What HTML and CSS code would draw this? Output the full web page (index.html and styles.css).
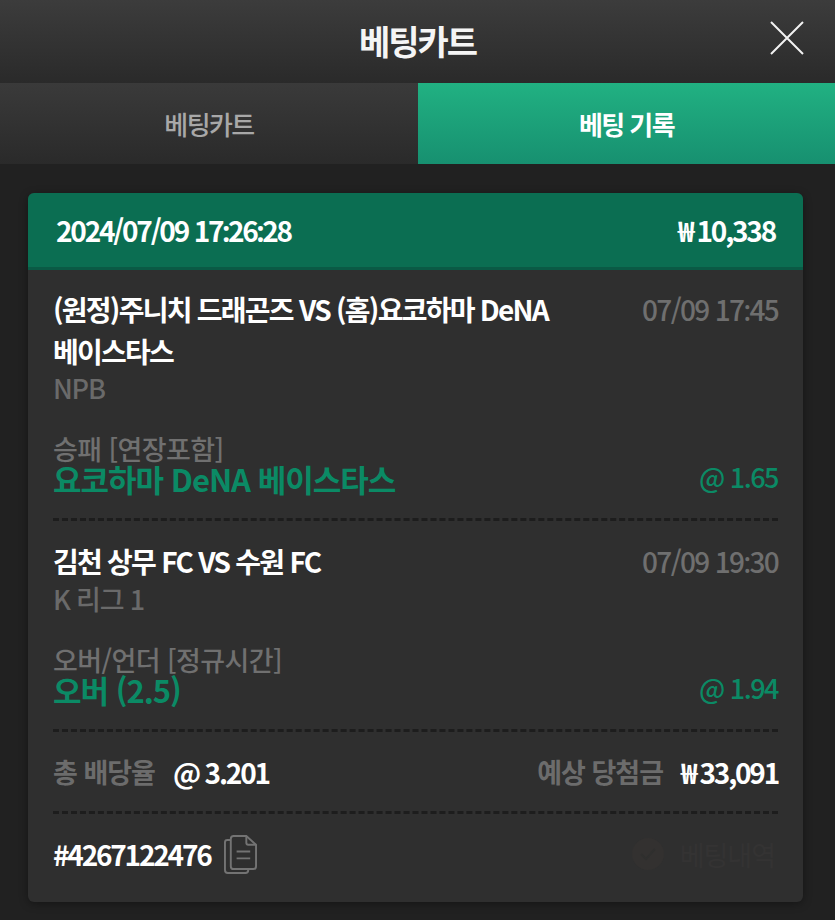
FILE: index.html
```html
<!DOCTYPE html>
<html lang="ko">
  <head>
    <meta charset="utf-8">
    <title>베팅카트</title>
    <link rel="stylesheet" href="styles.css">
  </head>
  <body>
    <header class="top-bar">
      <h1 class="top-title">베팅카트</h1>
      <button class="close-btn" aria-label="닫기">
        <svg width="34" height="34" viewBox="0 0 34 34">
          <path d="M1 1 L33 33 M33 1 L1 33" stroke="#f2f2f2" stroke-width="2" fill="none" />
        </svg>
      </button>
    </header>
    <nav class="tabs">
      <div class="tab">베팅카트</div>
      <div class="tab tab-active">베팅 기록</div>
    </nav>
    <main class="content">
      <section class="card">
        <div class="card-head">
          <span>2024/07/09 17<span class="colon">:</span>26<span class="colon">:</span>28</span>
          <span>₩ 10,338</span>
        </div>
        <div class="card-body">
          <div class="bet bet-first">
            <div class="bet-top">
              <div class="match">(원정)주니치 드래곤즈 VS (홈)요코하마 DeNA 베이스타스</div>
              <div class="time">07/09 17<span class="colon">:</span>45</div>
            </div>
            <div class="league">NPB</div>
            <div class="market">승패 [연장포함]</div>
            <div class="pick-row">
              <span class="pick">요코하마 DeNA 베이스타스</span>
              <span class="odds">@ 1.65</span>
            </div>
          </div>
          <div class="bet">
            <div class="bet-top">
              <div class="match">김천 상무 FC VS 수원 FC</div>
              <div class="time">07/09 19<span class="colon">:</span>30</div>
            </div>
            <div class="league">K 리그 1</div>
            <div class="market">오버/언더 [정규시간]</div>
            <div class="pick-row">
              <span class="pick">오버 (2.5)</span>
              <span class="odds">@ 1.94</span>
            </div>
          </div>
          <div class="summary">
            <div class="summary-item">
              <span class="summary-label">총 배당율</span>
              <span class="summary-value">@ 3.201</span>
            </div>
            <div class="summary-item">
              <span class="summary-label">예상 당첨금</span>
              <span class="summary-value">₩ 33,091</span>
            </div>
          </div>
          <div class="card-foot">
            <div class="ref">
              <span class="ref-no">#4267122476</span>
              <svg class="copy-icon" width="33" height="39" viewBox="0 0 34 40" fill="none" stroke="#737373" stroke-width="2">
                <path d="M7 5 H3.5 Q1 5 1 7.5 V36 Q1 39 4 39 H22 Q25 39 25 36 V35" />
                <path d="M10 1 H23 L33 10 V32 Q33 35 30 35 H10 Q7 35 7 32 V4 Q7 1 10 1 Z" />
                <path d="M23 1 V8 Q23 10 25 10 H33" />
                <path d="M13 17 H27 M13 24 H27" />
              </svg>
            </div>
            <div class="stamp">
              <svg width="32" height="32" viewBox="0 0 32 32">
                <circle cx="16" cy="16" r="16" fill="#333130" />
                <path d="M9 16 L14 21 L23 11" stroke="#2f2f2e" stroke-width="2" fill="none" />
              </svg>
              <span>베팅내역</span>
            </div>
          </div>
        </div>
      </section>
    </main>
  </body>
</html>
```

FILE: styles.css
```css
* {
  box-sizing: border-box;
}
html,
body {
  height: 100%;
}
body {
  margin: 0;
  background: #212121;
  color: #fff;
  font-family: "Noto Sans CJK KR", "Noto Sans", sans-serif;
  overflow: hidden;
}
.colon {
  font-family: "Noto Sans", sans-serif;
}
.top-bar {
  height: 83px;
  display: flex;
  align-items: center;
  justify-content: center;
  position: relative;
  background: linear-gradient(#3c3c3c, #2a2a2a);
}
.top-title {
  margin: -3px 0 0;
  font-size: 34px;
  font-weight: 700;
  letter-spacing: -2px;
  color: #f5f5f5;
}
.close-btn {
  position: absolute;
  top: 21px;
  right: 31px;
  padding: 0;
  height: 34px;
  background: none;
  border: none;
}
.tabs {
  height: 81px;
  display: flex;
}
.tab {
  width: 418px;
  display: flex;
  align-items: center;
  justify-content: center;
  background: linear-gradient(#3a3a3a, #2a2a2a);
  color: #a8a8a8;
  font-size: 26px;
  font-weight: 500;
  letter-spacing: -1.6px;
}
.tab-active {
  flex: 1;
  background: linear-gradient(#21b182, #179070);
  color: #fff;
  font-weight: 700;
}
.content {
  padding: 29px 32px 0 28px;
}
.card {
  height: 709px;
  border-radius: 6px;
  background: #2f2f2f;
  box-shadow: 0 2px 8px rgba(0, 0, 0, 0.35);
  overflow: hidden;
}
.card-head {
  height: 77px;
  padding: 0 28px;
  display: flex;
  align-items: center;
  justify-content: space-between;
  background: #0b6e52;
  border-bottom: 3px solid #0a5a45;
  font-size: 28px;
  font-weight: 700;
  letter-spacing: -2.2px;
}
.card-body {
  padding: 0 25px;
}
.bet {
  padding: 19px 0 25px;
  border-bottom: 3px dashed #1d1d1d;
}
.bet-first {
  padding-top: 18px;
}
.bet-top {
  display: flex;
  justify-content: space-between;
}
.match {
  width: 520px;
  font-size: 28px;
  font-weight: 700;
  line-height: 42px;
  letter-spacing: -1.75px;
  word-break: keep-all;
}
.time {
  font-size: 28px;
  line-height: 42px;
  font-weight: 500;
  letter-spacing: -1.65px;
  color: #6f6f6f;
}
.league {
  font-size: 27px;
  line-height: 32px;
  font-weight: 500;
  letter-spacing: -1.2px;
  color: #6a6a6a;
}
.market {
  margin-top: 30px;
  font-size: 27px;
  line-height: 30px;
  font-weight: 500;
  letter-spacing: -0.6px;
  color: #707070;
}
.pick-row {
  display: flex;
  justify-content: space-between;
  align-items: center;
  height: 29px;
  line-height: 29px;
}
.pick {
  display: block;
  font-size: 31px;
  font-weight: 700;
  letter-spacing: -1px;
  color: #0b8a65;
}
.odds {
  font-size: 27px;
  font-weight: 500;
  letter-spacing: -1.5px;
  color: #0b8a65;
  margin-top: -4px;
}
.summary {
  height: 82px;
  display: flex;
  align-items: center;
  justify-content: space-between;
  border-bottom: 3px dashed #1d1d1d;
}
.summary-item {
  display: flex;
  align-items: center;
  gap: 18px;
}
.summary-label {
  font-size: 27px;
  font-weight: 700;
  letter-spacing: -1px;
  color: #6c6c6c;
}
.summary-value {
  font-size: 28px;
  font-weight: 700;
  letter-spacing: -2.2px;
}
.card-foot {
  height: 80px;
  display: flex;
  align-items: center;
  justify-content: space-between;
}
.ref {
  display: flex;
  align-items: center;
  gap: 13px;
}
.ref-no {
  font-size: 28px;
  font-weight: 700;
  letter-spacing: -2.2px;
}
.stamp {
  display: flex;
  align-items: center;
  gap: 16px;
  padding-right: 3px;
  font-size: 27px;
  color: #343333;
  letter-spacing: -1px;
}
```
